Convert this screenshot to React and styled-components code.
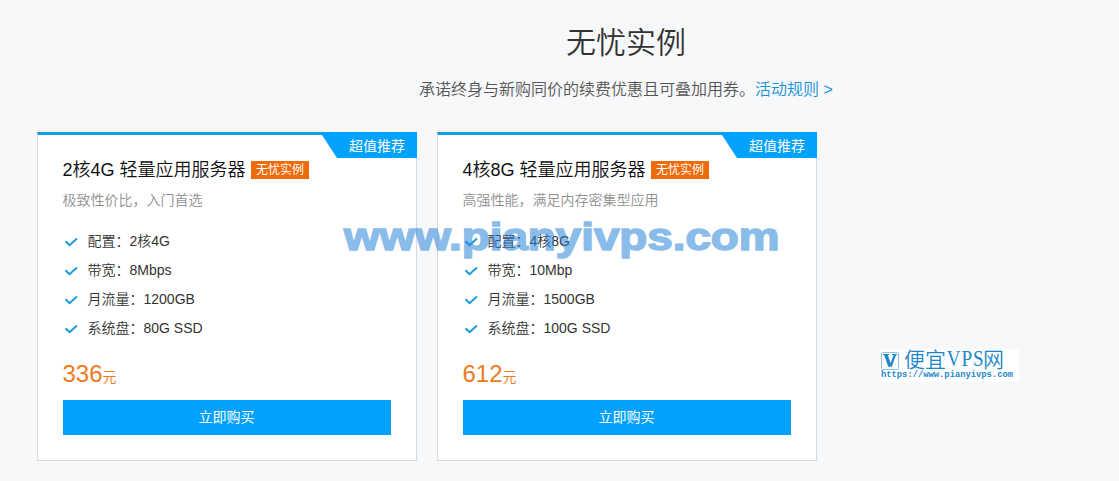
import React from "react";
import styled, { createGlobalStyle } from "styled-components";

const GlobalStyle = createGlobalStyle`
  * {
    box-sizing: border-box;
  }
  body {
    margin: 0;
    overflow: hidden;
    background-color: #f7f8fa;
    font-family: "Liberation Sans", "Noto Sans CJK SC", sans-serif;
  }
`;

const Page = styled.div`
  position: relative;
  width: 1119px;
  height: 481px;
  overflow: hidden;
  padding: 20px 0 0 37px;
`;

const Section = styled.section`
  width: 1178px;
`;

const Title = styled.h1`
  margin: 0;
  height: 46px;
  line-height: 46px;
  font-size: 30px;
  font-weight: 350;
  text-align: center;
  color: #333;
`;

const Subtitle = styled.p`
  margin: 12px 0 0;
  height: 24px;
  line-height: 24px;
  font-size: 16px;
  font-weight: 350;
  text-align: center;
  color: #555;
`;

const RuleLink = styled.a`
  color: #1a8fd6;
`;

const CardList = styled.div`
  display: flex;
  gap: 20px;
  margin-top: 30px;
`;

const Card = styled.div`
  position: relative;
  width: 380px;
  height: 329px;
  padding: 22px 25px 0;
  background-color: #fff;
  border: 1px solid #d5d8dc;
  border-top: 3px solid #199cdb;
`;

const Ribbon = styled.span`
  position: absolute;
  top: -3px;
  right: -1px;
  width: 97px;
  height: 26px;
  padding-right: 12px;
  line-height: 28px;
  font-size: 14px;
  text-align: right;
  color: #fff;
  background-color: #00a2fd;
  clip-path: polygon(0 0, 100% 0, 100% 100%, 17px 100%);
`;

const CardHeader = styled.div`
  display: flex;
  align-items: center;
  height: 26px;
`;

const CardTitle = styled.h2`
  margin: 0 0 0 -0.5px;
  line-height: 26px;
  font-size: 18px;
  font-weight: 350;
  white-space: nowrap;
  color: #111;
`;

const Tag = styled.span`
  width: 58px;
  height: 18px;
  margin-left: 5.5px;
  line-height: 18px;
  font-size: 12px;
  text-align: center;
  color: #fff;
  background-color: #f06a08;
`;

const Description = styled.p`
  margin: 6px 0 0 -0.5px;
  height: 22px;
  line-height: 22px;
  font-size: 14px;
  font-weight: 350;
  color: #909090;
`;

const SpecList = styled.ul`
  margin: 14px 0 0 -0.5px;
  padding: 0;
  list-style: none;
`;

const Spec = styled.li`
  display: flex;
  align-items: center;
  height: 29px;
  font-size: 14px;
  font-weight: 350;
  color: #333;
`;

const CheckIcon = styled.svg`
  width: 14px;
  height: 10px;
  margin: 5px 10px 0 1px;
`;

const Price = styled.div`
  display: flex;
  align-items: baseline;
  height: 34px;
  margin: 16px 0 0 -0.5px;
  line-height: 34px;
  font-size: 24px;
  color: #ee7a22;
`;

const Unit = styled.span`
  font-size: 14px;
  font-weight: 350;
`;

const BuyButton = styled.button`
  display: block;
  width: 328px;
  height: 35px;
  margin-top: 9px;
  padding: 0 1px 3px 0;
  border: 0;
  font-family: inherit;
  font-size: 14px;
  color: #fff;
  background-color: #00a2fd;
`;

const Watermark = styled.div`
  position: absolute;
  left: 343.5px;
  top: 214px;
  line-height: 46px;
  font-size: 38.5px;
  font-weight: bold;
  white-space: nowrap;
  color: #2b86da;
  -webkit-text-stroke: 1.6px #2b86da;
  opacity: 0.55;
  transform: scaleX(1.188);
  transform-origin: 0 0;
`;

const SiteLogo = styled.div`
  position: absolute;
  left: 880px;
  top: 349px;
  width: 139px;
  height: 33px;
  background-color: #fff;
  color: #1c86c8;
`;

const LogoRow = styled.div`
  display: flex;
  align-items: center;
  height: 21px;
`;

const LogoMark = styled.svg`
  width: 19px;
  height: 19px;
  margin: 1px 5px 0 1px;
`;

const LogoName = styled.span`
  display: flex;
  align-items: center;
  height: 21px;
  margin: -3px 0 0 -1px;
  line-height: 21px;
  font-family: "Noto Sans CJK SC", sans-serif;
  font-size: 21px;
  font-weight: 350;
`;

const LogoLatin = styled.span`
  width: 37px;
  padding-left: 1px;
  font-family: "Liberation Serif", serif;
  font-size: 23px;
  letter-spacing: 1px;
  transform: scaleX(0.83);
  transform-origin: 0 50%;
`;

const LogoUrl = styled.div`
  padding-left: 1px;
  line-height: 11px;
  font-family: "Liberation Mono", monospace;
  font-size: 8.8px;
  font-weight: bold;
  white-space: nowrap;
`;

const plans = [
  {
    name: "2核4G 轻量应用服务器",
    description: "极致性价比，入门首选",
    specs: ["配置：2核4G", "带宽：8Mbps", "月流量：1200GB", "系统盘：80G SSD"],
    price: 336,
  },
  {
    name: "4核8G 轻量应用服务器",
    description: "高强性能，满足内存密集型应用",
    specs: ["配置：4核8G", "带宽：10Mbp", "月流量：1500GB", "系统盘：100G SSD"],
    price: 612,
  },
];

function PlanCard({ plan }) {
  return (
    <Card>
      <Ribbon>超值推荐</Ribbon>
      <CardHeader>
        <CardTitle>{plan.name}</CardTitle>
        <Tag>无忧实例</Tag>
      </CardHeader>
      <Description>{plan.description}</Description>
      <SpecList>
        {plan.specs.map((spec) => (
          <Spec key={spec}>
            <CheckIcon viewBox="0 0 14 10" fill="none">
              <path d="M1.5 4.2L5.5 8.2L13 1.5" stroke="#1a9bd7" strokeWidth="2" />
            </CheckIcon>
            {spec}
          </Spec>
        ))}
      </SpecList>
      <Price>
        {plan.price}
        <Unit>元</Unit>
      </Price>
      <BuyButton>立即购买</BuyButton>
    </Card>
  );
}

function App() {
  return (
    <>
      <GlobalStyle />
      <Page>
        <Section>
          <Title>无忧实例</Title>
          <Subtitle>
            承诺终身与新购同价的续费优惠且可叠加用券。
            <RuleLink>活动规则 &gt;</RuleLink>
          </Subtitle>
          <CardList>
            {plans.map((plan) => (
              <PlanCard key={plan.name} plan={plan} />
            ))}
          </CardList>
        </Section>
        <Watermark>www.pianyivps.com</Watermark>
        <SiteLogo>
          <LogoRow>
            <LogoMark viewBox="0 0 19 19" fill="none">
              <rect x="0.5" y="1.5" width="17" height="17" rx="1" stroke="#8cc4e6" />
              <path d="M2 3.5h6M11 3.5h5" stroke="#1c86c8" />
              <path d="M4.8 3.5L9 15.5" stroke="#1c86c8" strokeWidth="3.4" />
              <path d="M14 3.5L9.6 15.5" stroke="#1c86c8" strokeWidth="2.2" />
            </LogoMark>
            <LogoName>
              便宜<LogoLatin>VPS</LogoLatin>网
            </LogoName>
          </LogoRow>
          <LogoUrl>https://www.pianyivps.com</LogoUrl>
        </SiteLogo>
      </Page>
    </>
  );
}

export default App;
